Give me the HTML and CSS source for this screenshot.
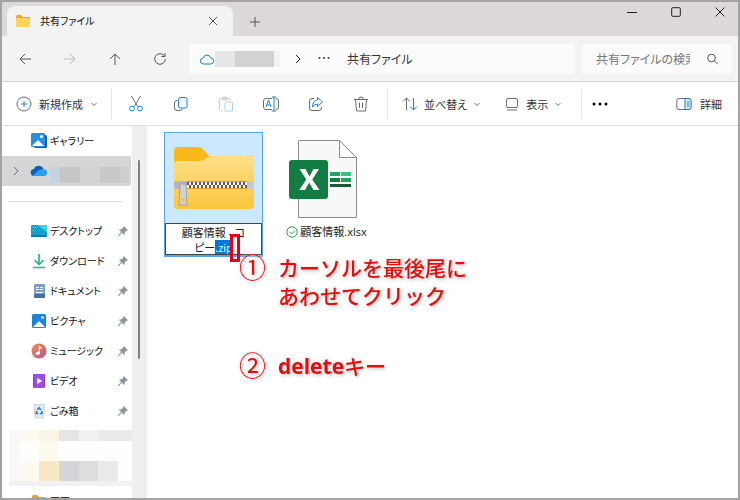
FILE: index.html
```html
<!DOCTYPE html>
<html lang="ja">
<head>
<meta charset="utf-8">
<title>共有ファイル</title>
<link rel="stylesheet" href="styles.css">
</head>
<body>
<header class="titlebar">
  <div class="tab">
    <svg class="i16" viewBox="0 0 16 16"><path fill="#f0a81c" d="M1 3.500Q1 2 2.500 2H6l2 2h6q1 0 1 1v3H1z"/><rect x="1" y="5" width="14" height="9" rx="1" fill="#ffd262"/></svg>
    <span class="tab-name">共有ファイル</span>
    <button class="plain" aria-label="タブを閉じる"><svg class="i10" viewBox="0 0 10 10"><path class="ln dark" d="M1 1l8 8M9 1l-8 8"/></svg></button>
  </div>
  <button class="plain new-tab" aria-label="新しいタブ"><svg class="i10" viewBox="0 0 10 10"><path class="ln dark" d="M5 0v10M0 5h10"/></svg></button>
  <div class="window-buttons">
    <button class="plain" aria-label="最小化"><svg class="i10" viewBox="0 0 10 10"><path class="ln black" d="M0 5.500h10"/></svg></button>
    <button class="plain" aria-label="最大化"><svg class="i10" viewBox="0 0 10 10"><rect class="ln black" x=".7" y=".7" width="8.600" height="8.600" rx="1"/></svg></button>
    <button class="plain" aria-label="閉じる"><svg class="i10" viewBox="0 0 10 10"><path class="ln black" d="M.5.5l9 9M9.500.5l-9 9"/></svg></button>
  </div>
</header>

<nav class="address">
  <div class="history">
    <button class="plain" aria-label="戻る"><svg class="i12" viewBox="0 0 12 12"><path class="ln dark" d="M12 6H1M6 1L1 6l5 5"/></svg></button>
    <button class="plain" aria-label="進む"><svg class="i12" viewBox="0 0 12 12"><path class="ln light" d="M0 6h11M6 1l5 5-5 5"/></svg></button>
    <button class="plain" aria-label="上へ"><svg class="i12" viewBox="0 0 12 12"><path class="ln dark" d="M6 12V1M1 6l5-5 5 5"/></svg></button>
    <button class="plain" aria-label="更新"><svg class="i12" viewBox="0 0 12 12"><path class="ln dark" d="M11.300 6A5.300 5.300 0 1 1 9.500 2L11 3.500M11 0v3.500H7.500"/></svg></button>
  </div>
  <div class="path">
    <svg class="i14" viewBox="0 0 14 14"><path class="ln blue" d="M3.500 12a3 3 0 0 1-.2-6 3.800 3.800 0 0 1 7.400 0 3 3 0 0 1-.2 6z"/></svg>
    <span class="redacted"><i></i><i></i><i></i></span>
    <svg class="i10 crumb" viewBox="0 0 10 10"><path class="ln black" d="M3 1l4 4-4 4"/></svg>
    <button class="plain" aria-label="その他の場所"><svg class="i12" viewBox="0 0 12 12"><g fill="#333"><circle cx="1.500" cy="5" r="1"/><circle cx="6" cy="5" r="1"/><circle cx="10.500" cy="5" r="1"/></g></svg></button>
    <a class="here" href="#">共有ファイル</a>
  </div>
  <label class="search">
    <input type="text" placeholder="共有ファイルの検索" aria-label="共有ファイルの検索">
    <svg class="i12" viewBox="0 0 12 12"><circle class="ln dark" cx="5.500" cy="5" r="3.800"/><path class="ln dark" d="M8.200 7.700l3.500 3.500"/></svg>
  </label>
</nav>

<div class="toolbar">
  <button class="tool new"><svg class="i16" viewBox="0 0 16 16"><circle class="ln grey" cx="8" cy="8" r="7"/><path class="ln blue" d="M8 5v6M5 8h6"/></svg>新規作成<svg class="i8" viewBox="0 0 8 8"><path class="ln grey" d="M1.500 3L4 5.500 6.500 3"/></svg></button>
  <div class="icons">
    <button class="plain" aria-label="切り取り"><svg class="i16" viewBox="0 0 16 16"><path class="ln grey" d="M3.500 0l6.500 11M12.500 0L6 11"/><circle class="ln blue" cx="4" cy="12.600" r="2.400"/><circle class="ln blue" cx="12" cy="12.600" r="2.400"/></svg></button>
    <button class="plain" aria-label="コピー"><svg class="i16" viewBox="0 0 16 16"><path class="ln grey" d="M4.500 4.500H4Q1.500 4.500 1.500 7v5q0 2.500 2.500 2.500h3q2 0 2.500-2"/><rect class="ln blue" x="5.500" y="1.500" width="8.500" height="10.500" rx="2"/></svg></button>
    <button class="plain" aria-label="貼り付け"><svg class="i16" viewBox="0 0 16 16"><path class="ln pale" d="M5 15H3q-1.500 0-1.500-1.500V4q0-1.500 1.500-1.500h8Q12.500 2.500 12.500 4M5 1h4v3H5z"/><rect class="ln paleblue" x="7" y="6" width="7.500" height="9" rx="1"/></svg></button>
    <button class="plain" aria-label="名前の変更"><svg class="i16" viewBox="0 0 16 16"><path class="ln grey" d="M9 2.500H3Q.5 2.500.5 5v6q0 2.500 2.500 2.500h6M13 2.500q2.500 0 2.500 2.500v6q0 2.500-2.500 2.500"/><path class="ln blue" d="M3 11l2.500-7L8 11M4 9h3M11 1v14M9 1h4M9 15h4"/></svg></button>
    <button class="plain" aria-label="共有"><svg class="i16" viewBox="0 0 16 16"><path class="ln grey" d="M6 2.500H4Q1.500 2.500 1.500 5v7q0 2.500 2.500 2.500h7q2.500 0 2.500-2.500v-1"/><path class="ln blue" d="M9.500 1.500l5 4.500-5 4.500V8Q6 8 4.500 11 4.500 4.500 9.500 4z"/></svg></button>
    <button class="plain" aria-label="削除"><svg class="i16" viewBox="0 0 16 16"><path class="ln grey" d="M1 3.500h14M5.500 3.500q0-2.500 2.500-2.500t2.500 2.500M2.500 3.500l1 11.500h9l1-11.500M6.500 6.500V12M9.500 6.500V12"/></svg></button>
  </div>
  <div class="view">
    <button class="tool"><svg class="i16" viewBox="0 0 16 16"><path class="ln grey" d="M4.500 14V2M1 5.500L4.500 2 8 5.500"/><path class="ln blue" d="M11.500 2v12M8 10.500l3.500 3.500 3.500-3.500"/></svg>並べ替え<svg class="i8" viewBox="0 0 8 8"><path class="ln grey" d="M1.500 3L4 5.500 6.500 3"/></svg></button>
    <button class="tool"><svg class="i16" viewBox="0 0 16 16"><rect class="ln grey" x="2.500" y="2.500" width="11" height="9" rx="1.500"/><path class="ln grey" d="M3 14h10"/></svg>表示<svg class="i8" viewBox="0 0 8 8"><path class="ln grey" d="M1.500 3L4 5.500 6.500 3"/></svg></button>
  </div>
  <button class="plain more" aria-label="もっと見る"><svg class="i16" viewBox="0 0 16 16"><circle cx="2" cy="8" r="1.500"/><circle cx="8" cy="8" r="1.500"/><circle cx="14" cy="8" r="1.500"/></svg></button>
  <button class="tool details"><svg class="i16" viewBox="0 0 16 16"><path fill="#d6ebfb" d="M9 2.500h4q2.200 0 2.200 2.500v6q0 2.500-2.200 2.500H9z"/><path class="ln grey" d="M9 2.500H3Q.8 2.500.8 5v6q0 2.500 2.200 2.500h6"/><path class="ln blue" d="M9 2.500h4q2.200 0 2.200 2.500v6q0 2.500-2.200 2.500H9zM11 6h2.500M11 8h2.500M11 10h2.500"/></svg>詳細</button>
</div>

<div class="main">
  <aside class="sidebar">
    <div class="tree">
      <a class="item" href="#"><svg class="i16" viewBox="0 0 16 16"><rect x="3" y="2" width="13" height="13" rx="1.500" fill="#0b5fae"/><rect x="0" y="0" width="14" height="14" rx="1.500" fill="#2b8fe0"/><path d="M1 13l6-6 6 6z" fill="#fff"/><circle cx="10.500" cy="3.500" r="1.500" fill="#fff"/></svg>ギャラリー</a>
      <a class="item current" href="#" aria-label="OneDrive"><svg class="i8 open" viewBox="0 0 8 8"><path class="ln grey" d="M2 0l4 4-4 4"/></svg><svg class="i16" viewBox="0 0 16 16"><path fill="#0f5fbe" d="M3.500 13A3.500 3.500 0 0 1 3 6a5 5 0 0 1 9.400 0z"/><path fill="#2ba0ee" d="M2 12l6-5 4.500-.8a3.400 3.400 0 0 1 .3 6.800h-9z"/></svg><span class="blurred"><i></i><i></i><i></i><i></i><i></i></span></a>
      <hr>
      <a class="item" href="#"><svg class="i16" viewBox="0 0 16 16"><rect y="2" width="16" height="12" rx="1" fill="#16a0c8"/><path fill="#42d3d8" d="M6 2h9q1 0 1 1v6z"/><path fill="#0e7cae" d="M0 12h16v1q0 1-1 1H1q-1 0-1-1z"/><path fill="#fff" d="M2 4h1v1H2zM2 7h1v1H2zM4 4h1v1H4z"/></svg>デスクトップ<svg class="i10 pin" viewBox="0 0 12 12"><path d="M7 0l5 5-1.500 1-.5-.2L8 8l-.5 3L4.700 8.200 1 12H0v-1l3.800-3.700L1 4.500 4 4l2.200-2L6 1.500z"/></svg></a>
      <a class="item" href="#"><svg class="i16" viewBox="0 0 16 16"><path fill="none" stroke="#2eb398" stroke-width="1.700" d="M8 1v10M3.500 7L8 11.500 12.500 7M2 14.500h12"/></svg>ダウンロード<svg class="i10 pin" viewBox="0 0 12 12"><path d="M7 0l5 5-1.500 1-.5-.2L8 8l-.5 3L4.700 8.200 1 12H0v-1l3.800-3.700L1 4.500 4 4l2.200-2L6 1.500z"/></svg></a>
      <a class="item" href="#"><svg class="i16" viewBox="0 0 16 16"><rect x="3" y="1" width="11" height="14" rx="1" fill="#7f9ec0"/><path fill="#4d6e99" d="M3 11h11v3q0 1-1 1H4q-1 0-1-1z"/><path stroke="#fff" d="M5 4.500h3M5 6.500h3M9 4.500h3M9 6.500h3M5 9.500h7"/></svg>ドキュメント<svg class="i10 pin" viewBox="0 0 12 12"><path d="M7 0l5 5-1.500 1-.5-.2L8 8l-.5 3L4.700 8.200 1 12H0v-1l3.800-3.700L1 4.500 4 4l2.200-2L6 1.500z"/></svg></a>
      <a class="item" href="#"><svg class="i16" viewBox="0 0 16 16"><rect x="1" y="1" width="14" height="14" rx="1.500" fill="#1785d8"/><path d="M2 14l6-6 6 6z" fill="#fff"/><circle cx="11.500" cy="4.500" r="1.300" fill="#fff"/></svg>ピクチャ<svg class="i10 pin" viewBox="0 0 12 12"><path d="M7 0l5 5-1.500 1-.5-.2L8 8l-.5 3L4.700 8.200 1 12H0v-1l3.800-3.700L1 4.500 4 4l2.200-2L6 1.500z"/></svg></a>
      <a class="item" href="#"><svg class="i16" viewBox="0 0 16 16"><defs><linearGradient id="m" x1="0" y1="0" x2="1" y2="1"><stop offset="0" stop-color="#ee8b4e"/><stop offset="1" stop-color="#bb5590"/></linearGradient></defs><circle cx="8" cy="8" r="7.500" fill="url(#m)"/><circle cx="6.800" cy="10.300" r="1.900" fill="#fff"/><path fill="#fff" d="M7.700 3h1.200l2.100 2-.8 1-1.300-1v5.300H7.700z"/></svg>ミュージック<svg class="i10 pin" viewBox="0 0 12 12"><path d="M7 0l5 5-1.500 1-.5-.2L8 8l-.5 3L4.700 8.200 1 12H0v-1l3.800-3.700L1 4.500 4 4l2.200-2L6 1.500z"/></svg></a>
      <a class="item" href="#"><svg class="i16" viewBox="0 0 16 16"><rect x="2" y="1" width="12" height="14" rx="1" fill="#9b4fe0"/><path stroke="#5d22a0" stroke-dasharray="1 1.500" d="M2.500 2v12M13.500 2v12"/><path d="M6 4.800v6.400L11 8z" fill="#fff"/></svg>ビデオ<svg class="i10 pin" viewBox="0 0 12 12"><path d="M7 0l5 5-1.500 1-.5-.2L8 8l-.5 3L4.700 8.200 1 12H0v-1l3.800-3.700L1 4.500 4 4l2.200-2L6 1.500z"/></svg></a>
      <a class="item" href="#"><svg class="i16" viewBox="0 0 16 16"><path fill="#e3e9ee" stroke="#bcc7cf" stroke-width=".7" d="M3 1.500h10.500L12.700 15H4z"/><path fill="none" stroke="#1d83d6" stroke-width="1.500" d="M6.200 7L8 4.800 9.800 7M10.800 8l.2 2.500H9M7.500 10.500H5.200L5.500 8"/></svg>ごみ箱<svg class="i10 pin" viewBox="0 0 12 12"><path d="M7 0l5 5-1.500 1-.5-.2L8 8l-.5 3L4.700 8.200 1 12H0v-1l3.800-3.700L1 4.500 4 4l2.200-2L6 1.500z"/></svg></a>
      <div class="mosaic">
        <i class="g0"></i><i class="c1"></i><i class="c2"></i><i class="g3"></i><i class="g1"></i><i class="g2"></i><i class="g2"></i>
        <i class="g0"></i><i></i><i class="c1"></i><i></i><i></i><i></i><i></i>
        <i class="g0"></i><i class="c1"></i><i class="c3"></i><i class="g5"></i><i class="g4"></i><i class="g2"></i><i></i>
        <i class="g1"></i><i class="g1"></i><i class="g1"></i><i class="g1"></i><i class="g1"></i><i class="g1"></i><i class="g1"></i>
      </div>
      <a class="item" href="#"><svg class="i16" viewBox="0 0 16 16"><path fill="#f0a01c" d="M1 3.500Q1 2 2.500 2H6l2 2h6q1 0 1 1v9H1z"/></svg>画面</a>
    </div>
    <div class="scroll"><div class="thumb"></div></div>
  </aside>

  <main class="files">
    <div class="file selected">
      <div class="thumbnail">
        <svg class="zip" viewBox="0 0 80 64">
          <defs><linearGradient id="f" x1="0" y1="0" x2="0" y2="1"><stop offset="0" stop-color="#ffe08a"/><stop offset="1" stop-color="#fbc53c"/></linearGradient></defs>
          <path fill="#f9b81c" d="M0 5q0-4 4-4h20q3 0 5 2l6 7h41q4 0 4 4v6H0z"/>
          <path fill="url(#f)" d="M0 18q0-3 4-3h22q3 0 5-2l3-2q2-1 4-1h38q4 0 4 4v45q0 4-4 4H4q-4 0-4-4z"/>
          <path fill="#d2a037" d="M12 35h61v8H12z"/>
          <path stroke="#5e5a50" stroke-width="3" stroke-dasharray="2 2" d="M13 37.500h60"/><path stroke="#f4f0e4" stroke-width="3" stroke-dasharray="2 2" d="M13 40.500h60"/>
          <path stroke="#5e5a50" stroke-width="3" stroke-dasharray="2 2" d="M15 40.500h58"/><path stroke="#f4f0e4" stroke-width="3" stroke-dasharray="2 2" d="M15 37.500h58"/>
          <rect y="35" width="13" height="8" rx="2" fill="#b4b6b8"/><rect x="73" y="35" width="6" height="8" fill="#c4c6c8"/>
          <path fill="#d0d2d4" stroke="#a0a3a5" d="M6 38h6l1 21H5z"/><rect x="7" y="52" width="4" height="4" fill="#f1c34c"/>
        </svg>
      </div>
      <textarea class="rename" rows="2" spellcheck="false" aria-label="ファイル名">顧客情報 - コピー.zip</textarea>
      <span class="caret-mark"></span>
    </div>
    <div class="file">
      <div class="thumbnail">
        <svg class="xlsx" viewBox="0 0 70 80">
          <path fill="#f8f8f8" stroke="#8c8c8c" d="M10.500 1.500h41l17 17v60h-58z"/><path fill="#fff" stroke="#8c8c8c" d="M51.500 1.500v17h17z"/>
          <path fill="#21a366" d="M42 33h10v4H42z"/><path fill="#33c481" d="M53 33h10v4H53z"/><path fill="#107c41" d="M42 39h10v4H42z"/><path fill="#21a366" d="M53 39h10v4H53z"/><path fill="#185c37" d="M42 45h21v3H42z"/>
          <rect x="1" y="21" width="39" height="39" rx="3" fill="#127c42"/>
          <path fill="#fff" d="M11.500 30h6l4 7.500 4-7.500h5.500l-6.700 10.500L31.500 51h-6l-4.300-7.500L17 51h-5.700l7-10.500z"/>
        </svg>
      </div>
      <div class="name"><svg class="i12" viewBox="0 0 12 12"><circle cx="6" cy="6" r="5.200" fill="none" stroke="#3a9a55"/><path fill="none" stroke="#3a9a55" d="M3.500 6l2 2 3.500-3.500"/></svg>顧客情報.xlsx</div>
    </div>
    <ol class="steps">
      <li><span class="num">①</span><p>カーソルを最後尾に<br>あわせてクリック</p></li>
      <li><span class="num">②</span><p><b>delete</b>キー</p></li>
    </ol>
  </main>
</div>
<script src="script.js"></script>
</body>
</html>
```
FILE: styles.css
```css
* { box-sizing: border-box; }
body {
  margin: 0;
  height: 100vh;
  display: flex;
  flex-direction: column;
  border: 2px solid #a3a3a3;
  background: #fff;
  overflow: hidden;
  color: #333;
  font-family: "Noto Sans CJK JP", sans-serif;
  font-feature-settings: "palt";
  font-size: 11px;
  line-height: 16px;
}
svg { display: block; flex: none; overflow: visible; }
a { color: inherit; text-decoration: none; }
button { font: inherit; font-feature-settings: inherit; color: inherit; border: 0; background: none; padding: 0; }
.plain { display: flex; align-items: center; justify-content: center; }
.i8 { width: 8px; height: 8px; }
.i10 { width: 10px; height: 10px; }
.i12 { width: 12px; height: 12px; }
.i14 { width: 14px; height: 14px; }
.i16 { width: 16px; height: 16px; }
.ln { fill: none; stroke-width: 1; }
.black { stroke: #222; }
.dark { stroke: #555; }
.grey { stroke: #6c6c6c; }
.light { stroke: #bbb; }
.pale { stroke: #ccc; }
.blue { stroke: #1a80d6; }
.paleblue { stroke: #a5d0f0; }

.titlebar { display: flex; height: 34px; background: #dcd9d8; flex: none; }
.tab {
  display: flex;
  align-items: center;
  gap: 9px;
  width: 226px;
  margin: 4px 0 0 5px;
  padding: 0 15px 0 8px;
  border-radius: 8px 8px 0 0;
  background: #f3f3f3;
}
.tab-name { flex: 1; color: #111; font-size: 10px; }
.new-tab { width: 44px; padding-top: 6px; }
.window-buttons { display: flex; margin-left: auto; height: 20px; gap: 34px; padding-right: 13px; }

.address { display: flex; align-items: center; height: 46px; flex: none; background: #f3f3f3; border-bottom: 1px solid #d9d6d6; }
.history { display: flex; gap: 33px; width: 187px; padding-left: 17px; }
.path { display: flex; align-items: center; flex: 1; height: 30px; padding-left: 11px; border-radius: 4px; background: #fbfbfb; }
.redacted { display: grid; grid-template-columns: 20px 39px 6px; height: 16px; margin-left: 1px; }
.redacted i { background: #e6e6e6; }
.redacted i:nth-child(2) { background: #d2d2d2; }
.redacted i:nth-child(3) { background: #f3f3f3; }
.crumb { margin: 0 15px 0 13px; }
.here { margin-left: 17px; font-size: 12px; }
.search { display: flex; align-items: center; width: 150px; height: 30px; margin: 0 6px 0 7px; padding: 0 14px; border-radius: 4px; background: #fbfbfb; }
.search input {
  width: 94px;
  margin-right: 16px;
  padding: 0;
  border: 0;
  outline: 0;
  background: none;
  font: inherit;
  font-feature-settings: inherit;
  font-size: 12px;
}
.search input::placeholder { color: #777; }

.toolbar { display: flex; align-items: center; height: 44px; flex: none; border-bottom: 1px solid #ddd; }
.tool { display: flex; align-items: center; gap: 6px; white-space: nowrap; }
.new { width: 110px; height: 30px; padding-left: 14px; border-right: 1px solid #e6e6e6; gap: 7px; }
.icons { display: flex; gap: 29px; padding: 0 18px 0 16px; height: 30px; border-right: 1px solid #e6e6e6; }
.view { display: flex; gap: 23px; height: 30px; padding: 0 19px 0 14px; border-right: 1px solid #e6e6e6; }
.more { margin-left: 10px; }
.details { margin-left: auto; padding-right: 16px; gap: 8px; }

.main { display: flex; flex: 1; min-height: 0; }
.sidebar { display: flex; width: 145px; flex: none; overflow: hidden; }
.tree { width: 130px; }
.item { display: flex; align-items: center; height: 30px; gap: 3px; padding: 0 4px 0 29px; color: #111; font-size: 10px; }
.current { padding: 0 0 0 10px; background: #d6d6d6; border-radius: 0 2px 2px 0; margin-right: 1px; }
.open { margin-right: 8px; }
.pin { margin-left: auto; fill: #8d979f; }
.tree hr { margin: 15px 9px 14px 7px; border: 0; border-top: 1px solid #ddd; }
.blurred { display: grid; grid-template-columns: 10px 20px 20px 20px 9px; height: 16px; margin-top: 8px; }
.blurred i { background: #cecece; }
.blurred i:first-child { background: #c5d2df; }
.blurred i:nth-child(2) { background: #c6c6c6; }
.blurred i:nth-child(3) { background: #d3d3d5; }
.blurred i:nth-child(4) { background: #c9c9c9; }
.mosaic { display: grid; grid-template-columns: 11px 19px 20px 20px 19px 20px 1fr; grid-template-rows: 11px 20px 20px 5px; margin: 4px 0 0 7px; }
.mosaic i { background: #fefefd; }
.mosaic .c1 { background: #fdfaf0; }
.mosaic .c2 { background: #f9f4e6; }
.mosaic .c3 { background: #f7e9c5; }
.mosaic .g0 { background: #f8f8f8; }
.mosaic .g1 { background: #f1f1f1; }
.mosaic .g2 { background: #eaeaea; }
.mosaic .g3 { background: #e4e5e6; }
.mosaic .g4 { background: #dddddd; }
.mosaic .g5 { background: #d3d5d8; }
.scroll { width: 15px; padding: 34px 6px 0 6px; background: #efefef; }
.thumb { width: 2px; height: 199px; background: #808080; border-radius: 1px; }

.files { position: relative; display: flex; align-items: flex-start; gap: 10px; flex: 1; padding: 6px 0 0 17px; }
.file { position: relative; width: 99px; }
.thumbnail { display: flex; align-items: center; justify-content: center; height: 91px; }
.selected { border: solid #5ba5e0; border-width: 1px 1px 2px; }
.selected .thumbnail { height: 90px; background: #cce8ff; }
.zip { width: 80px; height: 64px; }
.xlsx { width: 70px; height: 80px; margin-top: 2px; }
.rename {
  display: block;
  width: 97px;
  height: 32px;
  margin: 0;
  padding: 1px 14px;
  border: 1px solid #444;
  outline: 0;
  resize: none;
  overflow: hidden;
  background: #fff;
  color: #222;
  font: 11px/15px "Open Sans", "Noto Sans CJK JP", sans-serif;
  font-feature-settings: inherit;
  text-align: center;
}
.rename::selection { background: #0078d7; color: #fff; }
.caret-mark { position: absolute; right: 22px; bottom: -7px; width: 10px; height: 28px; border: 3px solid #e60012; }
.name { display: flex; align-items: center; justify-content: center; gap: 2px; margin-top: 1px; padding-left: 8px; white-space: nowrap; color: #222; font-family: "Open Sans", "Noto Sans CJK JP", sans-serif; }

.steps { position: absolute; left: 92px; top: 127px; margin: 0; padding: 0; list-style: none; color: #e60c0c; font-size: 21px; line-height: 28px; font-feature-settings: normal; }
.steps li { display: flex; margin-bottom: 42px; filter: drop-shadow(0 0 2px #fff) drop-shadow(1px 1px 1px #bbb); }
.steps p { margin: 0; font-weight: 500; }
.steps b { font-family: "Open Sans", sans-serif; font-weight: 700; }
.num { width: 39px; font-size: 27px; }
```
FILE: script.js
```js
const field = document.querySelector('.rename');
const dot = field.value.lastIndexOf('.');
field.focus();
field.setSelectionRange(dot, field.value.length);
```
